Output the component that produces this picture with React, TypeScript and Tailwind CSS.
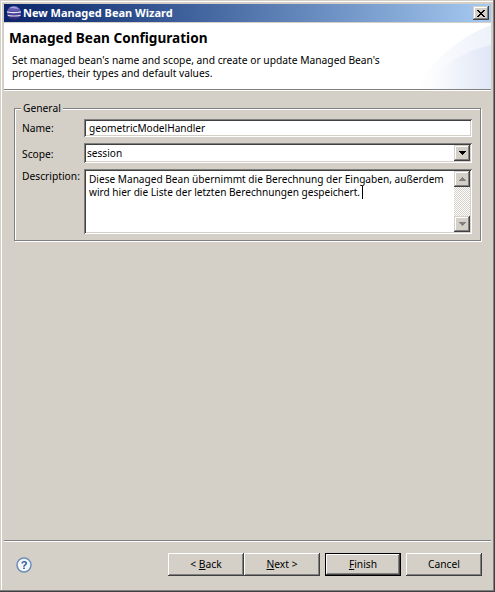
const F = "[font-family:'Noto_Sans','Liberation_Sans',sans-serif]";
const raised = "shadow-[inset_-1px_-1px_0_#404040,inset_1px_1px_0_#ffffff,inset_-2px_-2px_0_#808080,inset_2px_2px_0_#d4d0c8]";
const thin = "shadow-[inset_-1px_-1px_0_#404040,inset_1px_1px_0_#d4d0c8,inset_-2px_-2px_0_#808080,inset_2px_2px_0_#ffffff]";
const sunken = "shadow-[inset_1px_1px_0_#808080,inset_-1px_-1px_0_#ffffff,inset_2px_2px_0_#404040,inset_-2px_-2px_0_#d4d0c8]";

function Arrow({ dir, color }: { dir: "up" | "down"; color: string }) {
  return (
    <svg width="9" height="5" viewBox="0 0 9 5" shapeRendering="crispEdges">
      <path d={dir === "down" ? "M1 0h7v1h-1v1h-1v1h-1v1h-1v-1h-1v-1h-1v-1h-1z" : "M4 0h1v1h1v1h1v1h1v1h-7v-1h1v-1h1v-1h1z"} fill={color} />
    </svg>
  );
}

function Btn({ children, def, className = "" }: { children: React.ReactNode; def?: boolean; className?: string }) {
  return (
    <div className={`h-[23px] w-[76px] flex items-center justify-center text-black ${def ? "border border-black shadow-[inset_-1px_-1px_0_#404040,inset_1px_1px_0_#ffffff,inset_-2px_-2px_0_#808080]" : raised} ${className}`}>
      {children}
    </div>
  );
}

export default function App() {
  return (
    <div className={`w-[495px] h-[592px] bg-[#d4d0c8] p-[4px] flex flex-col overflow-hidden text-[10.25px] text-black ${F} shadow-[inset_-1px_-1px_0_#404040,inset_-2px_-2px_0_#808080] relative`}>
      <div className="absolute left-[1px] top-[1px] w-[492px] h-px bg-white" />
      <div className="absolute left-[1px] top-[1px] w-px h-[589px] bg-white" />

      {/* title bar */}
      <div className="h-[18px] shrink-0 flex items-center bg-gradient-to-r from-[#0a246a] to-[#a6caf0] pl-[2px] pr-[2px]">
        <svg width="16" height="16" viewBox="0 0 16 16" className="shrink-0">
          <defs>
            <linearGradient id="eg" x1="0" y1="0" x2="0" y2="1">
              <stop offset="0" stopColor="#7a72c8" />
              <stop offset="1" stopColor="#2a2270" />
            </linearGradient>
          </defs>
          <circle cx="8" cy="8" r="7" fill="url(#eg)" />
          <path d="M1 6.2 C5 7.4 10 7.4 15 6.2 L15 7.6 C10 8.6 5 8.6 1 7.6Z" fill="#e8e6f6" />
          <path d="M1.5 9.8 C6 10.8 10 10.8 14.8 9.8 L14.4 10.9 C10 11.8 6 11.8 2 10.9Z" fill="#d8d4ee" />
          <path d="M3 3 C6 1.2 11 1.6 13 4 C10 3 6 3 3 3Z" fill="#b4acdf" />
        </svg>
        <span className="ml-[1px] mb-[2px] font-bold text-[11px] leading-none text-white">New Managed Bean Wizard</span>
        <div className={`ml-auto w-[16px] h-[14px] bg-[#d4d0c8] flex items-center justify-center ${thin}`}>
          <svg width="8" height="7" viewBox="0 0 8 7" shapeRendering="crispEdges">
            <path d="M0 0h2v1h1v1h2v-1h1v-1h2v1h-1v1h-1v1h-1v1h1v1h1v1h1v1h-2v-1h-1v-1h-2v1h-1v1h-2v-1h1v-1h1v-1h1v-1h-1v-1h-1v-1h-1z" fill="#000" />
          </svg>
        </div>
      </div>

      {/* header */}
      <div className="mt-px h-[66px] shrink-0 bg-white relative overflow-hidden pl-[5px] pt-[5px]">
        <svg width="75" height="66" viewBox="0 0 75 66" className="absolute right-0 top-0">
          <defs>
            <linearGradient id="ba" x1="0" y1="0" x2="1" y2="0">
              <stop offset="0" stopColor="#ffffff" />
              <stop offset="1" stopColor="#dfe6f6" />
            </linearGradient>
          </defs>
          <path d="M0 66 C14 40 42 14 75 2 V66Z" fill="url(#ba)" opacity="0.55" />
          <path d="M10 66 C22 44 46 28 75 22 V66Z" fill="url(#ba)" />
        </svg>
        <div className="relative font-bold text-[13.6px] leading-[19px]">Managed Bean Configuration</div>
        <div className="relative mt-[7px] ml-[3px] leading-[13px] w-[420px]">
          Set managed bean's name and scope, and create or update Managed Bean's
          <br />
          properties, their types and default values.
        </div>
      </div>
      <div className="h-px shrink-0 bg-[#808080]" />
      <div className="h-px shrink-0 bg-white" />

      {/* body */}
      <div className="flex-1 px-[10px] pt-[11px]">
        <fieldset className="h-[139px] w-[467px] border border-[#808080] shadow-[1px_1px_0_#ffffff,inset_1px_1px_0_#ffffff] pl-[7px] pr-[8px] m-0 p-0">
          <legend className="-ml-[1px] px-[2px] leading-[13px] bg-[#d4d0c8]">General</legend>
          <div className="grid grid-cols-[62px_388px] gap-y-[6px] mt-[4px]">
            <div className="h-[18px] flex items-center pt-[2px]">Name:</div>
            <div className={`h-[18px] bg-white flex items-center pl-[5px] pt-[2px] text-[10.1px] ${sunken}`}>geometricModelHandler</div>

            <div className="h-[20px] flex items-center pt-[4px]">Scope:</div>
            <div className={`h-[20px] bg-white flex items-center pl-[3px] pr-[2px] ${sunken}`}>
              <span className="mt-[2px] text-[10.1px]">session</span>
              <div className={`ml-auto w-[16px] h-[16px] bg-[#d4d0c8] flex items-center justify-center ${thin}`}>
                <Arrow dir="down" color="#000" />
              </div>
            </div>

            <div className="leading-[13px] pt-px">Description:</div>
            <div className={`h-[65px] bg-white flex pl-[5px] pt-[2px] pr-[2px] pb-[2px] ${sunken}`}>
              <div className="flex-1 pt-[2px] leading-[13px] whitespace-nowrap text-[10.1px]">
                Diese Managed Bean übernimmt die Berechnung der Eingaben, außerdem
                <br />
                wird hier die Liste der letzten Berechnungen gespeichert.<span className="ml-[2px] inline-block w-px h-[13px] bg-black align-top" />
              </div>
              <div className="w-[16px] flex flex-col shrink-0">
                <div className={`h-[16px] bg-[#d4d0c8] flex items-center justify-center ${thin}`}>
                  <Arrow dir="up" color="#808080" />
                </div>
                <div className="flex-1 bg-[repeating-conic-gradient(#d4d0c8_0_25%,#ffffff_0_50%)] bg-[length:2px_2px]" />
                <div className={`h-[16px] bg-[#d4d0c8] flex items-center justify-center ${thin}`}>
                  <Arrow dir="down" color="#808080" />
                </div>
              </div>
            </div>
          </div>
        </fieldset>
      </div>

      {/* footer */}
      <div className="h-px shrink-0 bg-[#808080]" />
      <div className="h-px shrink-0 bg-white" />
      <div className="h-[46px] shrink-0 flex items-start pt-[11px] pl-[12px] pr-[9px]">
        <svg width="16" height="16" viewBox="0 0 16 16" className="mt-[4px] shrink-0">
          <circle cx="8" cy="8" r="7" fill="#f2f6fc" stroke="#6f8db8" strokeWidth="1.5" />
          <text x="8" y="12" textAnchor="middle" fontSize="11" fontWeight="700" fill="#2f5a96" fontFamily="'Liberation Sans', sans-serif">?</text>
        </svg>
        <div className="ml-auto flex">
          <Btn><span>&lt; <u>B</u>ack</span></Btn>
          <Btn><span><u>N</u>ext &gt;</span></Btn>
          <Btn def className="ml-[5px]"><span><u>F</u>inish</span></Btn>
          <Btn className="ml-[5px]">Cancel</Btn>
        </div>
      </div>
    </div>
  );
}
